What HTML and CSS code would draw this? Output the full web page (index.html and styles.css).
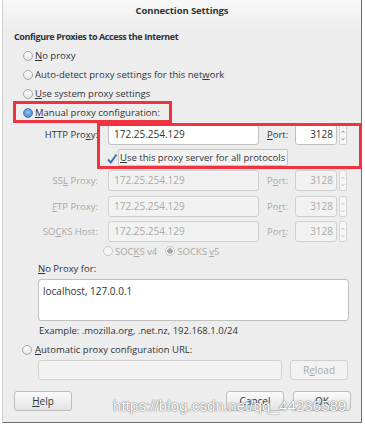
FILE: index.html
```html
<!DOCTYPE html>
<html>
<head>
    <meta charset="UTF-8">
    <meta name="viewport" content="width=device-width, initial-scale=1.0">
    <title>Connection Settings</title>
    <link rel="stylesheet" href="styles.css">
</head>
<body>
    <div class="dialog">
        <div class="title">Connection Settings</div>
        <div class="heading">Configure Proxies to Access the Internet</div>

        <!-- Proxy mode radios -->
        <div class="radio-row"><span class="radio"></span><span><u>N</u>o proxy</span></div>
        <div class="radio-row"><span class="radio"></span><span>Auto-detect proxy settings for this net<u>w</u>ork</span></div>
        <div class="radio-row"><span class="radio"></span><span><u>U</u>se system proxy settings</span></div>
        <div class="radio-row"><span class="radio checked"></span><span><u>M</u>anual proxy configuration:</span></div>

        <!-- Manual proxy fields -->
        <div class="proxy-grid">
            <div class="field-label">HTTP Pro<u>x</u>y:</div>
            <div class="input">172.25.254.129</div>
            <div class="port-label"><u>P</u>ort:</div>
            <div class="input port">3128</div>
            <div class="spin"><svg width="8" height="21" viewBox="0 0 8 21"><path d="M2 7 L4 4.5 L6 7" fill="none" stroke="#888" stroke-width="1"/><path d="M2 14 L4 16.5 L6 14" fill="none" stroke="#888" stroke-width="1"/></svg></div>

            <div class="check-row">
                <span class="checkbox"><svg width="12" height="12" viewBox="0 0 12 12"><path d="M2 6.5 L4.8 9.5 L10.5 1.5" fill="none" stroke="#3b73b9" stroke-width="2"/></svg></span>
                <span class="check-label"><u>U</u>se this proxy server for all protocols</span>
            </div>

            <div class="field-label disabled">SS<u>L</u> Proxy:</div>
            <div class="input off">172.25.254.129</div>
            <div class="port-label disabled">P<u>o</u>rt:</div>
            <div class="input port off">3128</div>
            <div class="spin"><svg width="8" height="21" viewBox="0 0 8 21"><path d="M2 7 L4 4.5 L6 7" fill="none" stroke="#bbb" stroke-width="1"/><path d="M2 14 L4 16.5 L6 14" fill="none" stroke="#bbb" stroke-width="1"/></svg></div>

            <div class="field-label disabled"><u>F</u>TP Proxy:</div>
            <div class="input off">172.25.254.129</div>
            <div class="port-label disabled">Po<u>r</u>t:</div>
            <div class="input port off">3128</div>
            <div class="spin"><svg width="8" height="21" viewBox="0 0 8 21"><path d="M2 7 L4 4.5 L6 7" fill="none" stroke="#bbb" stroke-width="1"/><path d="M2 14 L4 16.5 L6 14" fill="none" stroke="#bbb" stroke-width="1"/></svg></div>

            <div class="field-label disabled">SO<u>C</u>KS Host:</div>
            <div class="input off">172.25.254.129</div>
            <div class="port-label disabled">Por<u>t</u>:</div>
            <div class="input port off">3128</div>
            <div class="spin"><svg width="8" height="21" viewBox="0 0 8 21"><path d="M2 7 L4 4.5 L6 7" fill="none" stroke="#bbb" stroke-width="1"/><path d="M2 14 L4 16.5 L6 14" fill="none" stroke="#bbb" stroke-width="1"/></svg></div>
        </div>

        <div class="socks-row">
            <span class="radio off"></span><span>SOC<u>K</u>S v4</span>
            <span class="radio off checked-off"></span><span>SOCKS <u>v</u>5</span>
        </div>

        <div class="noproxy-label"><u>N</u>o Proxy for:</div>
        <div class="textarea">localhost, 127.0.0.1</div>
        <div class="example">Example: .mozilla.org, .net.nz, 192.168.1.0/24</div>

        <div class="radio-row auto"><span class="radio"></span><span><u>A</u>utomatic proxy configuration URL:</span></div>
        <div class="url-row">
            <div class="input off url"></div>
            <div class="button off">R<u>e</u>load</div>
        </div>

        <div class="button-row">
            <div class="button help"><u>H</u>elp</div>
            <div class="spacer"></div>
            <div class="button">Cancel</div>
            <div class="button">OK</div>
        </div>

        <!-- annotations over the screenshot -->
        <div class="mark mark-manual"></div>
        <div class="mark mark-http"></div>
        <div class="watermark">https://blog.csdn.net/qq_44236589</div>
    </div>
</body>
</html>
```

FILE: styles.css
```css
/* Page */
body {
    margin: 0;
    background-color: #ffffff;
    font-family: "Open Sans", "DejaVu Sans", sans-serif;
    font-size: 9.5px;
    color: #2e3436;
}

u {
    text-decoration: underline;
    text-underline-offset: 1px;
}

/* Dialog frame */
.dialog {
    position: relative;
    margin-left: 2px;
    width: 360px;
    height: 423px;
    box-sizing: border-box;
    border-left: 1px solid #d0d0d0;
    border-right: 1px solid #6e6e6e;
    border-bottom: 1px solid #6e6e6e;
    background: linear-gradient(#f8f8f8 0, #ededed 30px, #ededed 100%);
    display: flex;
    flex-direction: column;
}

.title {
    height: 22px;
    line-height: 22px;
    text-align: center;
    font-weight: bold;
    font-size: 9.5px;
    letter-spacing: -0.1px;
}

.heading {
    margin-top: 6px;
    padding-left: 11px;
    height: 18px;
    line-height: 18px;
    font-weight: bold;
    font-size: 9px;
    letter-spacing: -0.4px;
}

/* Radios */
.radio-row {
    display: flex;
    align-items: center;
    height: 19px;
    padding-left: 20px;
    gap: 2px;
}

.radio {
    width: 10px;
    height: 10px;
    box-sizing: border-box;
    border-radius: 50%;
    border: 1px solid #a8a8a8;
    background: linear-gradient(#ffffff, #e4e4e4);
    flex-shrink: 0;
}

.radio.checked {
    border-color: #4a7fc0;
    background: radial-gradient(circle at 50% 40%, #9cc3ee 0, #5a95d8 60%, #3c78c0 100%);
}

.radio.off {
    border-color: #c8c8c8;
    background: #f4f4f4;
}

.radio.checked-off {
    background: radial-gradient(circle, #a8a8a8 0, #a8a8a8 2.5px, #f4f4f4 3px);
}

/* Proxy fields */
.proxy-grid {
    margin-top: 2px;
    display: grid;
    grid-template-columns: 105px 159px 28px 44px 10px;
    grid-template-rows: 21px 17px 21px 21px 21px;
    row-gap: 4px;
    align-items: center;
}

.proxy-grid > :nth-child(n+12) {
    margin-top: 1px;
}

.field-label {
    text-align: right;
    padding-right: 10px;
}

.disabled {
    color: #a8aaa8;
}

.input {
    height: 21px;
    box-sizing: border-box;
    line-height: 19px;
    border: 1px solid #c0c0c0;
    border-radius: 3px;
    background-color: #ffffff;
    padding-left: 5px;
    width: 151px;
    font-size: 10px;
    box-shadow: inset 0 1px 1px rgba(0, 0, 0, 0.08);
}

.input.port {
    width: 42px;
    text-align: right;
    padding-right: 3px;
}

.input.off {
    background-color: #f2f2f2;
    color: #a8aaa8;
    border-color: #cfcfcf;
    box-shadow: none;
}

.spin {
    height: 21px;
    width: 8px;
    border: 1px solid #d4d4d4;
    box-sizing: border-box;
    border-radius: 2px;
    background: #f6f6f6;
    display: flex;
}

.check-row {
    grid-column: 1 / 6;
    display: flex;
    align-items: center;
    padding-left: 103px;
    height: 17px;
}

.checkbox {
    width: 12px;
    height: 12px;
    margin-top: 2px;
    display: flex;
}

.check-label {
    height: 17px;
    line-height: 16px;
    box-sizing: border-box;
    padding: 0 2px 0 1px;
    border: 1px solid #c6c6c6;
    border-radius: 2px;
    background-color: #f3f3f3;
}

/* SOCKS version */
.socks-row {
    margin-top: 1px;
    height: 18px;
    display: flex;
    align-items: center;
    padding-left: 100px;
    color: #a8aaa8;
    gap: 2px;
}

.socks-row > :nth-child(3) {
    margin-left: 6px;
}

/* Exceptions */
.noproxy-label {
    height: 18px;
    line-height: 18px;
    padding-left: 35px;
}

.textarea {
    margin: 1px 0 0 35px;
    width: 311px;
    height: 42px;
    box-sizing: border-box;
    border: 1px solid #c0c0c0;
    border-radius: 3px;
    background-color: #ffffff;
    padding: 4px 4px;
    font-size: 10px;
}

.example {
    height: 19px;
    line-height: 19px;
    padding-left: 36px;
}

.radio-row.auto {
    padding-left: 19px;
    gap: 3px;
}

.url-row {
    margin-top: 1px;
    display: flex;
    padding-left: 35px;
    gap: 8px;
}

.input.url {
    width: 244px;
    height: 20px;
}

/* Buttons */
.button {
    width: 58px;
    height: 20px;
    box-sizing: border-box;
    line-height: 18px;
    text-align: center;
    border: 1px solid #bdbdbd;
    border-radius: 3px;
    background: linear-gradient(#fbfbfb, #e3e3e3);
    font-size: 10px;
}

.button.off {
    color: #a8aaa8;
    background: #f2f2f2;
    border-color: #d0d0d0;
}

.button-row {
    margin-top: 11px;
    display: flex;
    padding: 0 10px 0 11px;
    gap: 9px;
}

.spacer {
    flex: 1;
}

/* Red annotation boxes */
.mark {
    position: absolute;
    border: 3px solid #ef3340;
    box-sizing: border-box;
}

.mark-manual {
    left: 10px;
    top: 101px;
    width: 159px;
    height: 22px;
}

.mark-http {
    left: 94px;
    top: 123px;
    width: 265px;
    height: 46px;
}

.watermark {
    position: absolute;
    left: 110px;
    top: 397px;
    font-family: "Liberation Sans", Arial, sans-serif;
    font-size: 15px;
    color: #ffffff;
    text-shadow: 0 0 1px rgba(70, 70, 70, 0.9), 0 0 2px rgba(120, 120, 120, 0.6);
    letter-spacing: 0.1px;
}
```
